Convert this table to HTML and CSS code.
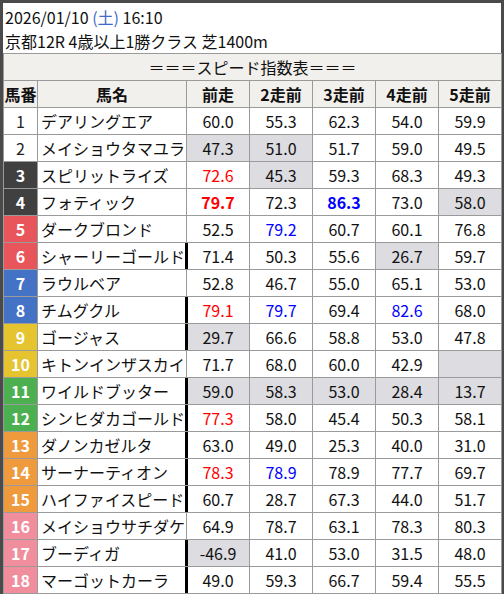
FILE: index.html
```html
<!DOCTYPE html>
<html lang="ja">
<head>
<meta charset="utf-8">
<title>スピード指数表</title>
<link rel="stylesheet" href="styles.css">
</head>
<body>
<div class="frame">
  <div class="race-info">
    <div class="line">2026/01/10 <span class="sat">(土)</span> 16:10</div>
    <div class="line">京都12R 4歳以上1勝クラス 芝1400m</div>
  </div>
  <table class="speed">
    <colgroup>
      <col class="c-no"><col class="c-name"><col class="c-val"><col class="c-val"><col class="c-val"><col class="c-val"><col class="c-val">
    </colgroup>
    <thead>
      <tr><th colspan="7" class="title">＝＝＝スピード指数表＝＝＝</th></tr>
      <tr class="head"><th>馬番</th><th>馬名</th><th>前走</th><th>2走前</th><th>3走前</th><th>4走前</th><th>5走前</th></tr>
    </thead>
    <tbody>
      <tr><td class="no w1">1</td><td class="name">デアリングエア</td><td>60.0</td><td>55.3</td><td>62.3</td><td>54.0</td><td>59.9</td></tr>
      <tr><td class="no w1">2</td><td class="name">メイショウタマユラ</td><td class="sh">47.3</td><td class="sh">51.0</td><td>51.7</td><td>59.0</td><td>49.5</td></tr>
      <tr><td class="no w2">3</td><td class="name">スピリットライズ</td><td class="red">72.6</td><td class="sh">45.3</td><td>59.3</td><td>68.3</td><td>49.3</td></tr>
      <tr><td class="no w2">4</td><td class="name">フォティック</td><td class="red b">79.7</td><td>72.3</td><td class="blue b">86.3</td><td>73.0</td><td class="sh">58.0</td></tr>
      <tr><td class="no w3">5</td><td class="name">ダークブロンド</td><td>52.5</td><td class="blue">79.2</td><td>60.7</td><td>60.1</td><td>76.8</td></tr>
      <tr><td class="no w3">6</td><td class="name">シャーリーゴールド</td><td class="tk">71.4</td><td>50.3</td><td>55.6</td><td class="sh">26.7</td><td>59.7</td></tr>
      <tr><td class="no w4">7</td><td class="name">ラウルベア</td><td>52.8</td><td>46.7</td><td>55.0</td><td>65.1</td><td>53.0</td></tr>
      <tr><td class="no w4">8</td><td class="name">チムグクル</td><td class="tk red">79.1</td><td class="blue">79.7</td><td>69.4</td><td class="blue">82.6</td><td>68.0</td></tr>
      <tr><td class="no w5">9</td><td class="name">ゴージャス</td><td class="tk sh">29.7</td><td>66.6</td><td>58.8</td><td>53.0</td><td>47.8</td></tr>
      <tr><td class="no w5">10</td><td class="name">キトンインザスカイ</td><td>71.7</td><td>68.0</td><td>60.0</td><td>42.9</td><td class="sh"></td></tr>
      <tr><td class="no w6">11</td><td class="name">ワイルドブッター</td><td class="tk sh">59.0</td><td class="sh">58.3</td><td class="sh">53.0</td><td class="sh">28.4</td><td class="sh">13.7</td></tr>
      <tr><td class="no w6">12</td><td class="name">シンヒダカゴールド</td><td class="tk red">77.3</td><td>58.0</td><td>45.4</td><td>50.3</td><td>58.1</td></tr>
      <tr><td class="no w7">13</td><td class="name">ダノンカゼルタ</td><td class="tk">63.0</td><td>49.0</td><td>25.3</td><td>40.0</td><td>31.0</td></tr>
      <tr><td class="no w7">14</td><td class="name">サーナーティオン</td><td class="tk red">78.3</td><td class="blue">78.9</td><td>78.9</td><td>77.7</td><td>69.7</td></tr>
      <tr><td class="no w7">15</td><td class="name">ハイファイスピード</td><td class="tk">60.7</td><td>28.7</td><td>67.3</td><td>44.0</td><td>51.7</td></tr>
      <tr><td class="no w8">16</td><td class="name">メイショウサチダケ</td><td>64.9</td><td>78.7</td><td>63.1</td><td>78.3</td><td>80.3</td></tr>
      <tr><td class="no w8">17</td><td class="name">ブーディガ</td><td class="tk sh">-46.9</td><td>41.0</td><td>53.0</td><td>31.5</td><td>48.0</td></tr>
      <tr><td class="no w8">18</td><td class="name">マーゴットカーラ</td><td class="tk">49.0</td><td>59.3</td><td>66.7</td><td>59.4</td><td>55.5</td></tr>
    </tbody>
  </table>
</div>
</body>
</html>
```

FILE: styles.css
```css
html, body {
  margin: 0;
  padding: 0;
  background: #ffffff;
}
body {
  font-family: "Noto Sans CJK JP", "Noto Sans", sans-serif;
  font-size: 16px;
  color: #111111;
}
.frame {
  border: 3px solid #4a4a4a;
  border-bottom: none;
  background: #ffffff;
}
.race-info {
  padding: 2px 0 0 2px;
}
.race-info .line {
  height: 24px;
  line-height: 24px;
  white-space: nowrap;
}
.sat {
  color: #4169c8;
}
.speed {
  border-collapse: collapse;
  table-layout: fixed;
  width: 498px;
}
.c-no { width: 34px; }
.c-name { width: 149px; }
.c-val { width: 63px; }
.speed th,
.speed td {
  border: 1px solid #9a9a9a;
  height: 27px;
  padding: 0;
  line-height: 24px;
  text-align: center;
  white-space: nowrap;
  box-sizing: border-box;
}
.speed th.title {
  background: #f1f0ec;
  font-weight: normal;
}
.head th {
  background: #f1f0ec;
  font-weight: bold;
}
.speed td.name {
  text-align: left;
  padding-left: 3px;
  overflow: hidden;
}
.speed td.no {
  font-weight: bold;
  color: #ffffff;
}
.speed td.w1 { background: #ffffff; color: #222222; font-weight: normal; }
.speed td.w2 { background: #404040; }
.speed td.w3 { background: #e8555a; }
.speed td.w4 { background: #4472c4; }
.speed td.w5 { background: #e6c430; }
.speed td.w6 { background: #4caf50; }
.speed td.w7 { background: #f09a3e; }
.speed td.w8 { background: #f18e9e; }
.speed td.sh { background: #dcdce1; }
.speed td.red { color: #ff0000; }
.speed td.blue { color: #0000ff; }
.speed td.b { font-weight: bold; }
.speed td.tk {
  position: relative;
}
.speed td.tk::before {
  content: "";
  position: absolute;
  left: -2px;
  top: 0;
  bottom: 0;
  width: 3px;
  background: #000000;
}
```
